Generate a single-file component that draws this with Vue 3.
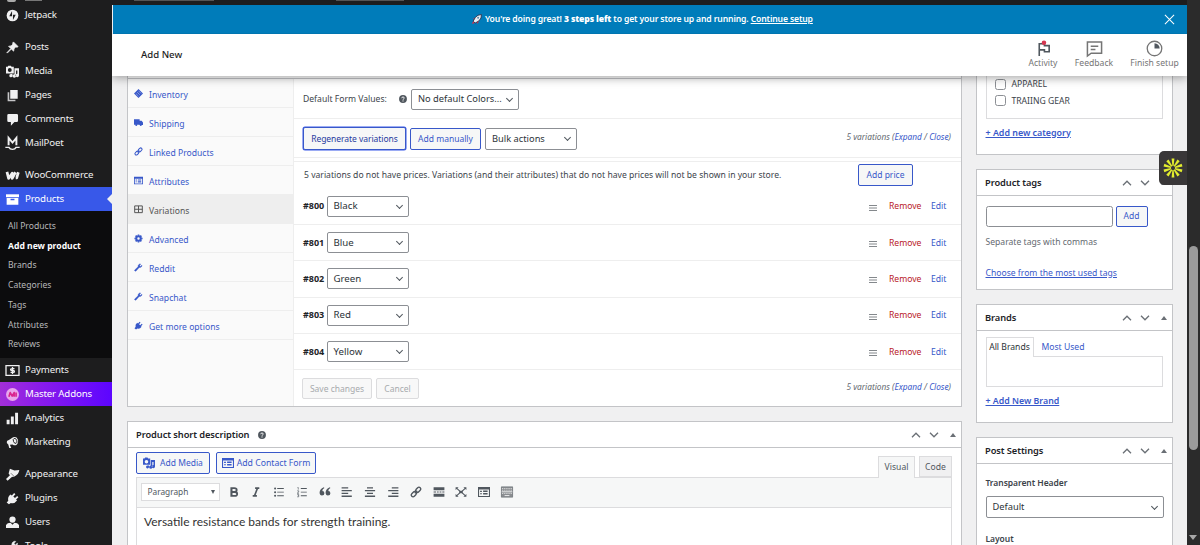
<script setup>
const icons = {
  jetpack: '<circle cx="10" cy="10" r="9" fill="currentColor"/><path d="M9.3 3v8H5zM10.7 17V9H15z" fill="#1d1d1e"/>',
  pin: '<path fill="currentColor" d="M10.400 3l1-1.600 7.200 7.200-1.600 1c-1-.4-2-.2-2.600.2l-2 2c-.4.900-.2 2.600-.600 3.800l-3.600-3.200L2 18.600 1.400 18l6-6.400-3.400-3.400c1.200-.500 2.800-.300 3.900-.700l2-2c.500-.700.700-1.500.500-2.500z" stroke="currentColor" stroke-width="1.200"/>',
  media: '<path fill="currentColor" fill-rule="evenodd" d="M0 2.500h2.500L3.500 1h4l1 1.500H12V13H0zM5.800 4.800a3 3 0 100 6 3 3 0 000-6zM13 5h7v11a2.700 2.700 0 11-2.500-2.700V8.500h-2V17a2.700 2.700 0 11-2.500-2.700zM3.500 14H10v2a2.500 2.500 0 11-2.500-2z"/>',
  pages: '<path fill="currentColor" d="M6.500 1.500H18V15H6.500z"/><path fill="currentColor" opacity=".8" d="M2.500 5H5v11.500h9.500V19h-12z"/>',
  comment: '<path fill="currentColor" d="M4 1.500h12.500q2 0 2 2V12q0 2-2 2H13l-5.500 5.500V14H4q-2 0-2-2V3.500q0-2 2-2z"/>',
  mailpoet: '<path fill="none" stroke="currentColor" stroke-width="3" d="M4 12.500V1.500l6 7 6-7v11"/><path fill="none" stroke="currentColor" stroke-width="2.200" d="M-1 16h5.500q1.500 3 5.500 3t5.500-3H21"/>',
  woo: '<path fill="none" stroke="currentColor" stroke-width="4.200" stroke-linejoin="round" d="M1.500 4.500L4 14.500l5.500-8v8l5-9.500M15 13.500h1.500L19 5"/>',
  archive: '<path fill="currentColor" d="M0 2h20v4.500H0z"/><path fill="currentColor" fill-rule="evenodd" d="M1 7.500h18V18H1zM7 9v2.200h6V9z"/>',
  money: '<path fill="none" stroke="currentColor" stroke-width="2" d="M0 2.500h20v15H0z"/><path fill="none" stroke="currentColor" stroke-width="2" d="M13 7H9q-2 0-2 1.500T9 10h2q2 0 2 1.500T11 13H7M10 4.500v11"/>',
  master: '<circle cx="10" cy="10" r="10" fill="#e9a5ec"/><path fill="none" stroke="#d9258f" stroke-width="2.600" stroke-linejoin="round" d="M4.500 13.500l2-6.500 3 5.500 3-5.500v6.500M15.500 7v6.500"/>',
  chart: '<path fill="currentColor" d="M1 12h4.500v7H1zM7.500 7H12v12H7.500zM14 1h4.500v18H14z"/>',
  horn: '<path fill="currentColor" d="M11 2q5-2 7 3t-2 9q-3 1-6-1l-4 .5 2 5H5L3.500 13Q0 11 1.500 7.500q1-1 3-1.500z"/><ellipse cx="14" cy="7.500" rx="2.600" ry="4" transform="rotate(-22 14 7.500)" fill="none" stroke="#1d1d1e" stroke-width="1.300"/>',
  brush: '<path fill="currentColor" d="M6 1l7 3L20.500 3q-1 7-7.500 10l-4 1-6.500 5.500-2.500-2.500L6 11 4 8.500z"/><path stroke="#1d1d1e" stroke-width=".8" d="M7.500 8l4.500 4.500"/>',
  plug: '<path fill="currentColor" d="M12.500 1.500L14.500 3.300 11.300 7l2.500 2.200L17.200 6l1.900 1.900-3.600 3.500 1.500 1.500q-4 5.500-9.500 4L4.500 19 1 16l2.500-2.500Q2 8 7 4l2 1.500z"/>',
  user: '<circle cx="10" cy="5.500" r="4.800" fill="currentColor"/><path fill="currentColor" d="M0 18.500V14q2-3.500 7-3.500l3 3 3-3q5 0 7 3.500v4.500z"/>',
  wrench: '<path fill="currentColor" d="M17.500 7q-2 4-6 3L4.500 18Q2 19 1 16L9 8.500Q8 4 12.500 2l2.500.2-2.700 3.300 2.500 2L17.500 4.500z" stroke="currentColor" stroke-width=".8"/>',
  dots: '<path fill="currentColor" d="M10 0l10 10-10 10L0 10z"/><path stroke="#fafafa" stroke-width=".9" d="M4 10l6 6M7 7l6 6M10 4l6 6"/>',
  truck: '<path fill="currentColor" d="M0 2.500h12.500V15H0zM12.500 6H17l3 4v5.500h-7.700z"/><circle cx="5" cy="15.500" r="2.200" fill="currentColor"/><circle cx="15" cy="15.500" r="2.200" fill="currentColor"/>',
  link: '<g fill="none" stroke="currentColor" stroke-width="2.300"><rect x="9" y="3.500" width="9.500" height="6" rx="3" transform="rotate(-45 13.500 6.500)"/><rect x="1.500" y="10.500" width="9.500" height="6" rx="3" transform="rotate(-45 6.500 13.500)"/><path d="M8 12l4-4"/></g>',
  form: '<path fill="currentColor" fill-rule="evenodd" d="M0 1.500h20v17H0zM1.800 6v10.700h16.400V6z"/><path fill="currentColor" d="M3.500 8h3v1.800h-3zm0 4h3v1.800h-3zM8.500 7.500H16V10H8.500zm0 4.300H16v2.500H8.500z"/>',
  grid: '<path fill="none" stroke="currentColor" stroke-width="2.200" d="M1.500 2h17v15h-17zM10 2v15M1.500 9.500h17"/>',
  gear: '<circle cx="10" cy="10" r="5" fill="none" stroke="currentColor" stroke-width="4.500"/><path stroke="currentColor" stroke-width="3.500" d="M10 1v3M10 16v3M1 10h3M16 10h3M3.600 3.600l2 2M14.400 14.400l2 2M3.600 16.400l2-2M14.400 5.600l2-2"/>',
  help: '<circle cx="10" cy="10" r="9.800" fill="currentColor"/><path fill="none" stroke="#fff" stroke-width="2.200" d="M6.800 8q0-3 3.200-3t3.200 2.500q0 1.500-1.700 2.300-1.500.8-1.500 2.200"/><circle cx="10" cy="14.800" r="1.400" fill="#fff"/>',
  bold: '<path fill="none" stroke="currentColor" stroke-width="3" d="M5.500 3.500h5q4 0 4 3.200T10.500 10h-4 4.500q4.300 0 4.300 3.300T11 16.500H5.500z M6 3v14"/>',
  italic: '<path fill="none" stroke="currentColor" stroke-width="2.600" d="M8.500 3.500h7M4.500 16.500h7M12.500 3.500L7.500 16.500"/>',
  ul: '<path fill="currentColor" d="M7 3.500h11V5H7zm0 6h11V11H7zm0 6h11V17H7z"/><circle cx="3.500" cy="4.300" r="1.700" fill="currentColor"/><circle cx="3.500" cy="10.300" r="1.700" fill="currentColor"/><circle cx="3.500" cy="16.300" r="1.700" fill="currentColor"/>',
  ol: '<path fill="currentColor" d="M8 3.500h10V5H8zm0 6h10V11H8zm0 6h10V17H8z"/><path fill="none" stroke="currentColor" stroke-width="1.100" d="M2.500 2.500h1.300V6M2 8h2.500v2L2 12h3M2 14h2.500v4H2M3 16h1.500"/>',
  quote: '<path fill="currentColor" d="M9 3.500Q5.500 5.500 5.500 8.500q3.500 0 3.500 3.500 0 4-4 4T1 11Q1 5 8 2zM19 3.500Q15.500 5.500 15.500 8.500q3.500 0 3.500 3.500 0 4-4 4t-4-5q0-6 7-9z"/>',
  left: '<path fill="currentColor" d="M1 2h11v2.200H1zm0 4.600h17v2.200H1zm0 4.600h11v2.200H1zM1 16h17v2.200H1z"/>',
  center: '<path fill="currentColor" d="M5 2h10v2.200H5zM1.500 6.600h17v2.200h-17zm3.500 4.600h10v2.200H5zM1.500 16h17v2.200h-17z"/>',
  right: '<path fill="currentColor" d="M8 2h11v2.200H8zM2 6.600h17v2.200H2zm6 4.600h11v2.200H8zM2 16h17v2.200H2z"/>',
  more: '<path fill="currentColor" d="M1 2h18v5H1zM1 13h18v5H1zM1 9h4v2H1zm5.500 0h3v2h-3zm4.500 0h3v2h-3zm4.500 0H19v2h-3.500z"/>',
  expand: '<path fill="none" stroke="currentColor" stroke-width="1.800" d="M2.500 3.500L8 8.500m9.500-5L12 8.500m-9.500 8L8 11.500m9.500 5l-5.500-5"/><path fill="currentColor" d="M1 2h5L1 6.500zM19 2h-5l5 4.500zM1 18h5l-5-4.500zM19 18h-5l5-4.500zM7 8h6v4H7z"/>',
  keys: '<path fill="#8a8d90" d="M0 1h20v18H0z"/><path stroke="#f6f7f7" stroke-width="1.200" stroke-dasharray="1.800 1.300" d="M1.500 4.200h17M1.500 7h17M1.500 12.500h17"/><path stroke="#f6f7f7" stroke-width="1.500" d="M0 9.700h20M6 16h8"/><path stroke="#7b8085" stroke-width="1.200" fill="none" d="M.7 1.700h18.600v16.600H.7z"/>',
}
const menu = [
  { t: 'Jetpack', i: 'jetpack' }, { t: 'Posts', i: 'pin', gap: true }, { t: 'Media', i: 'media' },
  { t: 'Pages', i: 'pages' }, { t: 'Comments', i: 'comment' }, { t: 'MailPoet', i: 'mailpoet' },
  { t: 'WooCommerce', i: 'woo', gap: true },
  { t: 'Products', i: 'archive', cls: 'current', sub: ['All Products', 'Add new product', 'Brands', 'Categories', 'Tags', 'Attributes', 'Reviews'] },
  { t: 'Payments', i: 'money' }, { t: 'Master Addons', i: 'master', cls: 'master' },
  { t: 'Analytics', i: 'chart' }, { t: 'Marketing', i: 'horn' },
  { t: 'Appearance', i: 'brush', gap: true }, { t: 'Plugins', i: 'plug' }, { t: 'Users', i: 'user' }, { t: 'Tools', i: 'wrench' },
]
const tabs = [
  ['Inventory', 'dots'], ['Shipping', 'truck'], ['Linked Products', 'link'], ['Attributes', 'form'],
  ['Variations', 'grid'], ['Advanced', 'gear'], ['Reddit', 'wrench'], ['Snapchat', 'wrench'], ['Get more options', 'plug'],
]
const variations = [['#800', 'Black'], ['#801', 'Blue'], ['#802', 'Green'], ['#803', 'Red'], ['#804', 'Yellow']]
const tools = ['bold', 'italic', 'ul', 'ol', 'quote', 'left', 'center', 'right', 'link', 'more', 'expand', 'form', 'keys']
const rays = [0, 36, 72, 108, 144, 180, 216, 252, 288, 324]
</script>

<template>
  <div class="screen">
    <nav class="sidebar">
      <div class="cut"><i></i><b></b></div>
      <template v-for="m in menu" :key="m.t">
        <div class="item" :class="[m.cls, { gap: m.gap }]">
          <svg viewBox="0 0 20 20" v-html="icons[m.i]"></svg><span>{{ m.t }}</span>
        </div>
        <div v-if="m.sub" class="sub">
          <div v-for="s in m.sub" :key="s" :class="{ on: s === 'Add new product' }"><span>{{ s }}</span></div>
        </div>
      </template>
    </nav>

    <div class="page">
      <div class="strip"><i></i><b></b></div>
      <div class="banner">
        <svg class="rocket" viewBox="0 0 20 20"><path fill="#d8304a" d="M3 9l6-3 6 6-3 6-2-5-5-4zM2 18l2-6 4 4z"/><path fill="#e8eef3" stroke="#2b2d4a" stroke-width="1.600" d="M19 1q-7 0-11 5l-4 7 3.500 3.500 7-4Q19.500 8 19 1z"/><circle cx="13" cy="7" r="1.800" fill="#5b87a8"/></svg>
        <span class="msg">You're doing great! <b>3 steps left</b> to get your store up and running. <u>Continue setup</u></span>
        <svg class="close" viewBox="0 0 12 12"><path d="M1 1l10 10M11 1L1 11"/></svg>
      </div>
      <header class="head">
        <span class="title">Add New</span>
        <div class="acts">
          <div class="act a1">
            <svg viewBox="0 0 18 18" fill="none" stroke="#50575e" stroke-width="1.700"><path d="M4.500 17V4H10v2h5v6.500h-5v-2H4.500"/><circle cx="9.500" cy="3" r="2.400" fill="#d63650" stroke="none"/></svg>
            <span>Activity</span>
          </div>
          <div class="act a2">
            <svg viewBox="0 0 18 18" fill="none" stroke="#757575" stroke-width="1.600"><path d="M1.500 2h15v12h-11l-4 3zM5 6.500h8M5 10h5"/></svg>
            <span>Feedback</span>
          </div>
          <div class="act a3">
            <svg viewBox="0 0 18 18"><circle cx="9" cy="9" r="7.700" fill="none" stroke="#757575" stroke-width="1.400"/><path fill="#50575e" d="M9 3.500A5.500 5.500 0 0114.500 9H9z"/></svg>
            <span>Finish setup</span>
          </div>
        </div>
      </header>

      <div class="content">
        <main class="left">
          <section class="box data">
            <ul class="tabs">
              <li v-for="t in tabs" :key="t[0]" :class="{ on: t[0] === 'Variations' }">
                <svg viewBox="0 0 20 20" v-html="icons[t[1]]"></svg><span>{{ t[0] }}</span>
              </li>
            </ul>
            <div class="pane">
              <div class="defaults">
                <span class="lbl">Default Form Values:</span>
                <svg class="help" viewBox="0 0 20 20" v-html="icons.help"></svg>
                <div class="select s1"><span>No default Colors...</span><i></i></div>
              </div>
              <div class="bar">
                <div class="btn primary"><span>Regenerate variations</span></div>
                <div class="btn manual"><span>Add manually</span></div>
                <div class="select s2"><span>Bulk actions</span><i></i></div>
                <em class="count">5 variations (<a>Expand</a> / <a>Close</a>)</em>
              </div>
              <div class="notice">
                <p>5 variations do not have prices. Variations (and their attributes) that do not have prices will not be shown in your store.</p>
                <div class="btn price"><span>Add price</span></div>
              </div>
              <div v-for="v in variations" :key="v[0]" class="row">
                <strong>{{ v[0] }}</strong>
                <div class="select s3"><span>{{ v[1] }}</span><i></i></div>
                <svg class="grip" viewBox="0 0 8 6"><path d="M0 .5h8M0 3h8M0 5.500h8"/></svg>
                <a class="del">Remove</a><a class="edit">Edit</a>
              </div>
              <div class="foot">
                <div class="btn off save"><span>Save changes</span></div>
                <div class="btn off cancel"><span>Cancel</span></div>
                <em class="count">5 variations (<a>Expand</a> / <a>Close</a>)</em>
              </div>
            </div>
          </section>

          <section class="box desc">
            <div class="bh"><h2>Product short description</h2><svg class="help" viewBox="0 0 20 20" v-html="icons.help"></svg>
              <div class="ctl"><svg viewBox="0 0 10 6"><path d="M1 5.200l4-4 4 4"/></svg><svg viewBox="0 0 10 6"><path d="M1 .8l4 4 4-4"/></svg><i></i></div>
            </div>
            <div class="editor">
              <div class="etop">
                <div class="btn media"><svg viewBox="0 0 20 20" v-html="icons.media"></svg><span>Add Media</span></div>
                <div class="btn cform"><svg viewBox="0 0 20 20" v-html="icons.form"></svg><span>Add Contact Form</span></div>
                <div class="etabs"><div class="et vis"><span>Visual</span></div><div class="et code"><span>Code</span></div></div>
              </div>
              <div class="ebox">
                <div class="tools">
                  <div class="para"><span>Paragraph</span><i></i></div>
                  <svg v-for="t in tools" :key="t" viewBox="0 0 20 20" v-html="icons[t]"></svg>
                </div>
                <p class="etext">Versatile resistance bands for strength training.</p>
              </div>
            </div>
          </section>
        </main>

        <aside class="right">
          <section class="box cats">
            <div class="inner">
              <label><i></i><span>APPAREL</span></label>
              <label><i></i><span>TRAIING GEAR</span></label>
            </div>
            <a class="add">+ Add new category</a>
          </section>
          <section class="box tags">
            <div class="bh"><h2>Product tags</h2>
              <div class="ctl"><svg viewBox="0 0 10 6"><path d="M1 5.200l4-4 4 4"/></svg><svg viewBox="0 0 10 6"><path d="M1 .8l4 4 4-4"/></svg><i></i></div>
            </div>
            <div class="tagrow"><div class="input"></div><div class="btn tagadd"><span>Add</span></div></div>
            <p>Separate tags with commas</p>
            <a class="choose">Choose from the most used tags</a>
          </section>
          <section class="box brands">
            <div class="bh"><h2>Brands</h2>
              <div class="ctl"><svg viewBox="0 0 10 6"><path d="M1 5.200l4-4 4 4"/></svg><svg viewBox="0 0 10 6"><path d="M1 .8l4 4 4-4"/></svg><i></i></div>
            </div>
            <div class="btabs"><div class="bt"><span>All Brands</span></div><a>Most Used</a></div>
            <div class="blist"></div>
            <a class="add">+ Add New Brand</a>
          </section>
          <section class="box settings">
            <div class="bh"><h2>Post Settings</h2>
              <div class="ctl"><svg viewBox="0 0 10 6"><path d="M1 5.200l4-4 4 4"/></svg><svg viewBox="0 0 10 6"><path d="M1 .8l4 4 4-4"/></svg><i></i></div>
            </div>
            <h3 class="th">Transparent Header</h3>
            <div class="select s4"><span>Default</span><i></i></div>
            <h3 class="lay">Layout</h3>
          </section>
        </aside>
      </div>
    </div>

    <div class="scroll"><div class="thumb"></div><i></i></div>
    <div class="widget"><svg viewBox="-10 -10 20 20"><path v-for="r in rays" :key="r" :transform="`rotate(${r})`" d="M-.6 -2L-1.400 -9.500H1.400L.6 -2z"/></svg></div>
  </div>
</template>

<style>
html, body { margin: 0; overflow: hidden; background: #f0f0f1; }
</style>

<style scoped>
* { box-sizing: border-box; }
.screen { position: relative; display: flex; width: 1200px; height: 545px; overflow: hidden; background: #f0f0f1; font: 8.600px/14px "Noto Sans", "Open Sans", sans-serif; color: #3c434a; white-space: nowrap; }
p, h2, h3, ul { margin: 0; padding: 0; }
a { color: #3858c9; }
svg { display: block; flex: none; overflow: visible; }

.sidebar { width: 112px; flex: none; background: #1d1d1e; color: #f0f0f1; }
.cut { height: 3px; display: flex; padding-left: 7px; }
.cut i { width: 9px; height: 2px; background: #aaa; border-radius: 0 0 5px 5px; }
.cut b { width: 17px; height: 1px; margin-left: 9px; background: #777; }
.item { height: 24px; display: flex; align-items: center; padding-left: 6px; font-size: 9.700px; letter-spacing: -.15px; }
.item.gap { margin-top: 8px; }
.item svg { width: 13px; height: 13px; margin-right: 6px; }
.item.current { position: relative; background: #3858e9; color: #fff; }
.item.current::after { content: ""; position: absolute; right: 0; top: 7px; border: 5px solid transparent; border-right-color: #f0f0f1; border-left: 0; }
.item.master { background: linear-gradient(90deg, #a22fd8, #8a1cea 35%, #5c05ff); color: #fff; }
.sub { height: 147px; padding-top: 5px; background: #0c0c0d; color: #b8b8ba; }
.sub div { height: 19.750px; display: flex; align-items: center; padding-left: 8px; }
.sub .on { color: #fff; font-weight: 700; }

.page { width: 1075px; flex: none; }
.strip { height: 5px; background: #1d1d1e; display: flex; }
.strip i { width: 80px; height: 1px; margin-left: 22px; background: #555; }
.strip b { width: 68px; height: 1px; margin-left: 122px; background: #555; }
.banner { height: 28.500px; display: flex; align-items: center; background: #007cba; color: #fff; margin-left: 1px; }
.rocket { width: 11px; height: 11px; margin-left: 358px; }
.msg { margin-left: 3px; font-weight: 600; letter-spacing: -.13px; }
.close { width: 11px; height: 11px; margin: 0 12px 0 auto; fill: none; stroke: #fff; stroke-width: 1.100; }
.head { position: relative; z-index: 2; height: 42.500px; display: flex; align-items: center; justify-content: space-between; padding-left: 29px; background: #fff; box-shadow: 0 2px 9px rgba(0,0,0,.35); clip-path: inset(0 0 -14px 0); }
.title { font-size: 9.600px; font-weight: 500; color: #1e1e1e; }
.acts { display: flex; }
.act { display: flex; flex-direction: column; align-items: center; color: #757575; padding-top: 1px; }
.act svg { width: 17px; height: 17px; }
.act span { line-height: 13px; }
.a1 { width: 41px; } .a2 { width: 61px; } .a3 { width: 60px; margin-right: 2.500px; }

.content { display: flex; padding: 0 14px 0 15px; gap: 14px; }
.left { width: 835px; }
.right { width: 197px; }
.box { background: #fff; border: 1px solid #c3c4c7; }
.data { height: 330.500px; border-top: 0; display: flex; padding-top: 3px; position: relative; }
.data::before { content: ""; position: absolute; left: 0; right: 0; top: 2px; height: 1px; background: #c3c4c7; }
.tabs { width: 166px; list-style: none; background: #fafafa; border-right: 1px solid #eee; }
.tabs li { height: 29px; display: flex; align-items: center; padding: 3px 0 0 6px; border-bottom: 1px solid #eee; color: #3858c9; }
.tabs svg { width: 9px; height: 9px; margin: -3px 6px 0 0; }
.tabs .on { background: #eee; color: #555; }
.pane { flex: 1; }
.defaults { height: 40px; display: flex; align-items: center; padding: 1px 0 0 9px; border-bottom: 1px solid #eee; }
.lbl { width: 96px; }
.help { width: 8px; height: 8px; color: #50575e; }
.select { height: 21px; display: flex; align-items: center; justify-content: space-between; padding: 0 6px; background: #fff; border: 1px solid #8c8f94; border-radius: 2px; font-size: 9.300px; color: #2c3338; }
.select i { width: 5px; height: 5px; border: solid #50575e; border-width: 0 1.200px 1.200px 0; transform: translateY(-1px) rotate(45deg); flex: none; }
.s1 { width: 108px; margin-left: 4px; }
.bar { height: 39px; display: flex; align-items: center; padding: 1px 0 0 9px; border-bottom: 1px solid #eee; }
.btn { height: 22px; display: flex; align-items: center; justify-content: center; background: #f6f7f7; border: 1px solid #3858c9; border-radius: 2px; color: #3858c9; font-size: 8.500px; }
.primary { width: 103px; height: 23px; color: #1f3a9e; letter-spacing: -.05px; box-shadow: 0 0 0 .5px #3858e9; }
.manual { width: 71px; margin-left: 4px; }
.s2 { width: 92px; height: 22px; margin-left: 4px; }
.count { margin: -4px 10px 0 auto; font-size: 8.300px; color: #646970; }
.notice { height: 27.700px; margin-top: 3px; border-top: 1px solid #eee; display: flex; align-items: center; padding-left: 10px; }
.notice p { width: 554px; margin-top: -1px; }
.price { width: 55px; }
.row { height: 36.300px; display: flex; align-items: center; padding-left: 9px; border-bottom: 1px solid #eee; color: #1d2327; }
.row strong { width: 23.500px; font-size: 9px; }
.s3 { width: 82.500px; font-size: 9.700px; }
.grip { width: 8px; height: 6px; margin: 3px 12px 0 460px; stroke: #84888c; stroke-width: 1; }
.del { width: 42px; color: #b8171f; }
.foot { display: flex; align-items: center; padding-left: 8px; height: 37px; }
.off { background: #f8f8f8; border-color: #dcdcde; color: #a7aaad; height: 21px; }
.save { width: 70px; } .cancel { width: 43px; margin-left: 4px; }

.desc { height: 200px; margin-top: 14.500px; }
.bh { height: 26px; display: flex; align-items: center; padding-left: 8px; border-bottom: 1px solid #c3c4c7; }
h2 { font-size: 9.300px; line-height: 14px; letter-spacing: -.08px; font-weight: 600; color: #1d2327; }
.bh .help { margin-left: 9px; }
.ctl { display: flex; align-items: center; margin-left: auto; padding-right: 5.500px; }
.ctl svg { width: 10px; height: 6px; margin-right: 8.500px; fill: none; stroke: #6a6f75; stroke-width: 1.300; }
.ctl svg + svg { margin-right: 10.500px; }
.ctl i { border: 3px solid transparent; border-bottom: 4.500px solid #6a6f75; border-top: 0; }
.editor { padding: 4px 9px 0 8px; }
.etop { height: 24.500px; display: flex; }
.btn.media { width: 74px; } .cform { width: 100px; margin-left: 6px; }
.btn svg { width: 12px; height: 12px; margin-right: 5px; }
.cform svg { margin-right: 3px; }
.cform { font-size: 8.700px; }
.etabs { display: flex; margin: 4px 0 0 auto; gap: 4px; }
.et { height: 21px; display: flex; align-items: center; justify-content: center; border: 1px solid #dcdcde; color: #50575e; }
.vis { width: 37px; height: 22px; padding-bottom: 2px; background: #f6f7f7; border-bottom: 0; position: relative; z-index: 1; }
.code { width: 33px; background: #f0f0f1; }
.ebox { height: 90px; border: 1px solid #dcdcde; }
.tools { height: 30px; display: flex; align-items: center; background: #f6f7f7; border-bottom: 1px solid #dcdcde; padding-left: 3.500px; color: #50575e; }
.tools svg { width: 12px; height: 12px; margin-right: 10.800px; }
.para { width: 79px; height: 18px; display: flex; align-items: center; justify-content: space-between; padding: 0 4px 0 6px; margin-right: 8px; background: #fff; border: 1px solid #dcdcde; font-size: 8.300px; }
.para i { border: 2.500px solid transparent; border-top: 4px solid #50575e; border-bottom: 0; }
.etext { padding: 6px 0 0 7px; font: 12px/16px Lato, sans-serif; color: #333; }

.cats { height: 78.500px; border-top: 0; padding: 0 9px 0 8.500px; }
.inner { height: 42.500px; border: 1px solid #dcdcde; border-top: 0; padding: 0 0 0 8px; }
.inner label { height: 16.500px; display: flex; align-items: center; }
.inner label i { width: 11px; height: 11px; border: 1px solid #8c8f94; border-radius: 2.500px; margin-right: 6px; }
.add, .choose { text-decoration: underline; }
.cats .add { display: block; font-size: 8.900px; font-weight: 600; margin-top: 7px; }
.tags { height: 121px; margin-top: 14.500px; }
.tagrow { display: flex; align-items: center; padding: 9.500px 0 0 8.500px; gap: 3px; }
.input { width: 127px; height: 21px; border: 1px solid #8c8f94; border-radius: 2.500px; }
.tagadd { width: 32px; height: 21px; }
.tags p { margin: 8px 0 0 8.500px; color: #646970; }
.choose { display: block; margin: 17.500px 0 0 8.500px; }
.brands { height: 118.500px; margin-top: 14px; }
.btabs { display: flex; align-items: center; height: 25px; padding: 6px 0 0 8.500px; }
.bt { width: 48px; height: 20px; display: flex; align-items: center; justify-content: center; background: #fff; border: 1px solid #dcdcde; border-bottom: 0; position: relative; z-index: 1; color: #2c3338; }
.btabs a { margin-left: 8px; }
.blist { height: 31px; margin: 0 9px 0 8.500px; border: 1px solid #dcdcde; }
.brands .add { display: block; margin: 7px 0 0 8.500px; font-size: 8.800px; font-weight: 600; }
.settings { height: 200px; margin-top: 14.500px; }
h3 { font-size: 8.500px; line-height: 14px; letter-spacing: -.05px; font-weight: 600; margin-left: 8.500px; }
.th { margin-top: 12px; }
.s4 { width: 178px; height: 22px; margin: 6px 0 0 8.500px; }
.lay { margin-top: 14px; }

.scroll { width: 13px; flex: none; background: #2b2b2b; position: relative; }
.thumb { position: absolute; left: 2px; top: 246px; width: 9px; height: 204px; border-radius: 5px; background: #9b9b9b; }
.scroll i { position: absolute; left: 2px; bottom: 5px; border: 4.500px solid transparent; border-top: 5px solid #a8a8a8; border-bottom: 0; }
.widget { position: absolute; z-index: 3; left: 1159px; top: 151px; width: 28px; height: 34px; display: flex; align-items: center; justify-content: center; background: #393738; border-radius: 5px 0 0 5px; }
.widget svg { width: 20px; height: 20px; fill: #e3ee2e; }
</style>
